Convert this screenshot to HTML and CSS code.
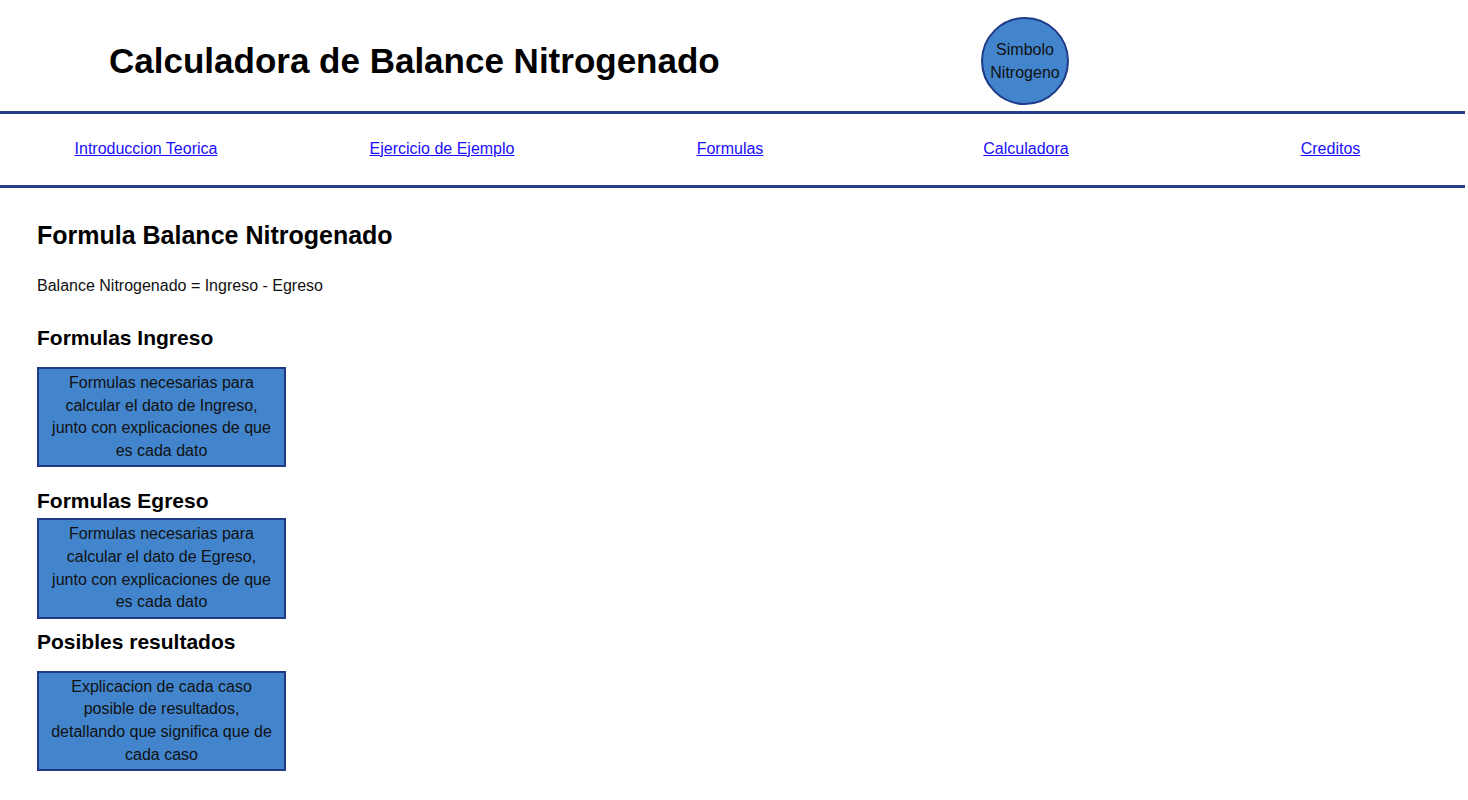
FILE: index.html
```html
<!DOCTYPE html>
<html lang="es">
<head>
<meta charset="utf-8">
<title>Calculadora de Balance Nitrogenado</title>
<link rel="stylesheet" href="styles.css">
</head>
<body>
<header class="header">
  <h1 class="title">Calculadora de Balance Nitrogenado</h1>
  <div class="logo">Simbolo<br>Nitrogeno</div>
</header>
<nav class="nav">
  <a href="#">Introduccion Teorica</a>
  <a href="#">Ejercicio de Ejemplo</a>
  <a href="#">Formulas</a>
  <a href="#">Calculadora</a>
  <a href="#">Creditos</a>
</nav>
<main class="content">
  <h2 class="h-main">Formula Balance Nitrogenado</h2>
  <p class="formula">Balance Nitrogenado = Ingreso - Egreso</p>
  <h3 class="h-sub h-ingreso">Formulas Ingreso</h3>
  <div class="box">Formulas necesarias para calcular el dato de Ingreso, junto con explicaciones de que es cada dato</div>
  <h3 class="h-sub h-egreso">Formulas Egreso</h3>
  <div class="box">Formulas necesarias para calcular el dato de Egreso, junto con explicaciones de que es cada dato</div>
  <h3 class="h-sub h-result">Posibles resultados</h3>
  <div class="box">Explicacion de cada caso posible de resultados, detallando que significa que de cada caso</div>
</main>
</body>
</html>
```
FILE: styles.css
```css
html, body {
  margin: 0;
  padding: 0;
  background: #fff;
}
body {
  font-family: "Liberation Sans", Arial, sans-serif;
  color: #000;
  width: 1465px;
}
.header {
  display: grid;
  grid-template-columns: 981px 88px 1fr;
  align-items: center;
  height: 111px;
  border-bottom: 3px solid #233e8b;
}
.title {
  margin: 0 0 0 109px;
  font-size: 35px;
  font-weight: bold;
  line-height: 40px;
  padding-top: 10px;
}
.logo {
  box-sizing: border-box;
  width: 88px;
  height: 88px;
  margin-top: 10px;
  border-radius: 50%;
  background: #4285cc;
  border: 2px solid #1f3a87;
  display: flex;
  align-items: center;
  justify-content: center;
  text-align: center;
  font-size: 16px;
  line-height: 23px;
  color: #111;
}
.nav {
  display: grid;
  grid-template-columns: 292px 300px 276px 316px 1fr;
  align-items: center;
  height: 71px;
  border-bottom: 3px solid #233e8b;
}
.nav a {
  justify-self: center;
  color: #1a0dff;
  font-size: 16px;
  text-decoration: underline;
  padding-bottom: 2px;
}
.nav a:last-child {
  margin-left: 12px;
}
.content {
  padding: 31px 0 0 37px;
  display: flex;
  flex-direction: column;
  align-items: flex-start;
}
.h-main {
  margin: 0;
  font-size: 25px;
  line-height: 32px;
  font-weight: bold;
}
.formula {
  margin: 25px 0 0;
  font-size: 16px;
  line-height: 20px;
  color: #111;
}
.h-sub {
  margin: 0;
  font-size: 21px;
  line-height: 24px;
  font-weight: bold;
}
.h-ingreso { margin-top: 30px; }
.h-egreso { margin-top: 22px; }
.h-result { margin-top: 11px; }
.box {
  box-sizing: border-box;
  width: 249px;
  background: #4285cc;
  border: 2px solid #1f3a87;
  text-align: center;
  font-size: 16px;
  line-height: 22.6px;
  color: #111;
  padding: 3px 10px 3px;
}
.h-ingreso + .box { margin-top: 17px; }
.h-egreso + .box { margin-top: 5px; }
.h-result + .box { margin-top: 17px; }
```
